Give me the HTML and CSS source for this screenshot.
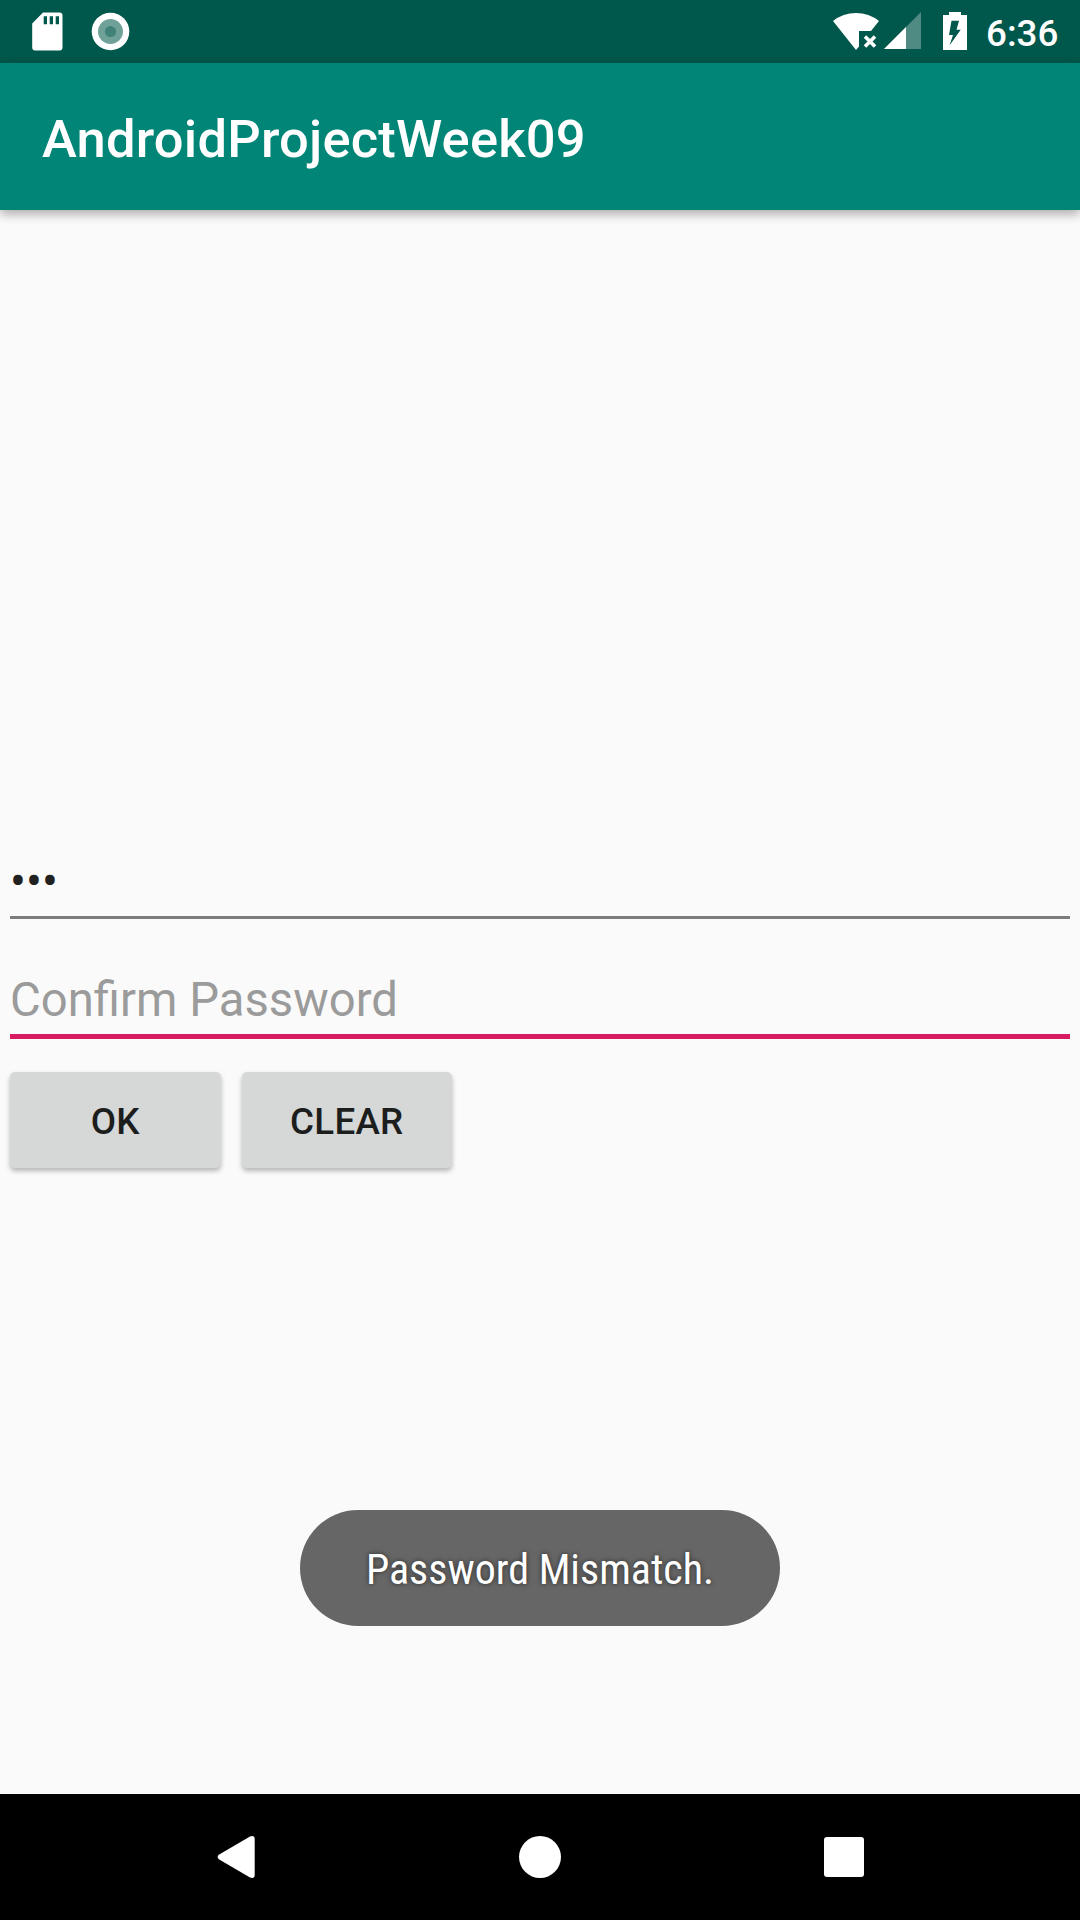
FILE: index.html
```
<!DOCTYPE html>
<html lang="en">
<head>
<meta charset="utf-8">
<title>AndroidProjectWeek09</title>
<link rel="stylesheet" href="styles.css">
</head>
<body>
<div class="screen">
  <header class="status-bar">
    <svg class="status-left" width="140" height="63" viewBox="0 0 140 63">
      <path fill="#fff" fill-rule="evenodd" d="M43 12.5H59.5a3 3 0 0 1 3 3V47.500a3 3 0 0 1-3 3H35.200a3 3 0 0 1-3-3V23.500zM43.700 16.200v8H47v-8zM49.700 16.200v8H53v-8zM55.700 16.200v8H59v-8z"/>
      <circle cx="110.500" cy="31.500" r="18.800" fill="#fff"/>
      <circle cx="110.500" cy="31.500" r="12.500" fill="#6fa199"/>
      <circle cx="110.500" cy="31.500" r="5.600" fill="#418278"/>
    </svg>
    <svg class="status-right" width="160" height="63" viewBox="820 0 160 63">
      <path fill="#fff" d="M833 21Q843 13 856 13T879 21L871 31H859V46.500L856 50z"/>
      <path stroke="#fff" stroke-width="3.600" d="M865 36.500l10 10m0-10l-10 10"/>
      <path fill="#4f8b82" d="M921 12V49H884z"/>
      <path fill="#fff" d="M906 27V49H884z"/>
      <path fill="#fff" d="M949 12h12v3h6v35h-24V15h6z"/>
      <path fill="#00574b" d="M951.500 20.700h7.500l-2.500 9h4.200L949.500 45.500l3.500-10.500h-4z"/>
    </svg>
    <span class="clock">6:36</span>
  </header>
  <div class="app-bar"><h1 class="title">AndroidProjectWeek09</h1></div>
  <main class="content">
    <div class="field field-filled"><span class="dots">•••</span></div>
    <div class="field field-focused"><span class="hint">Confirm Password</span></div>
    <div class="buttons">
      <button class="btn">OK</button>
      <button class="btn">CLEAR</button>
    </div>
    <div class="toast"><span class="toast-text">Password Mismatch.</span></div>
  </main>
  <nav class="nav-bar">
    <svg width="1080" height="126" viewBox="0 1794 1080 126">
      <path fill="#fff" d="M218.800 1854.800L250 1836.400Q254.700 1835 254.700 1839V1875Q254.700 1879 250 1877.600L218.800 1859.200Q216.500 1857 218.800 1854.800z"/>
      <circle cx="540" cy="1857" r="21" fill="#fff"/>
      <rect x="824" y="1837" width="40" height="40" rx="3" fill="#fff"/>
    </svg>
  </nav>
</div>
</body>
</html>
```
FILE: styles.css
```
* { box-sizing: border-box; }
body { margin: 0; font-family: Roboto, "Liberation Sans", sans-serif; }
.screen { width: 1080px; height: 1920px; display: flex; flex-direction: column; background: #fafafa; overflow: hidden; }
.status-bar { height: 63px; background: #00574b; display: flex; align-items: center; }
.status-right { margin-left: auto; }
.clock { width: 100px; padding-left: 6px; padding-top: 3px; font-size: 36.75px; font-weight: 500; line-height: 43px; color: #fff; white-space: nowrap; }
.app-bar { height: 147px; background: #008577; display: flex; align-items: center; padding: 4px 42px 0; box-shadow: 0 4px 10px rgba(0, 0, 0, .32); z-index: 1; }
.title { margin: 0; font-size: 52.5px; font-weight: 500; line-height: 62px; letter-spacing: .2px; color: #fff; }
.content { flex: 1; display: flex; flex-direction: column; padding: 622px 10px 0; }
.field { width: 1060px; display: flex; align-items: flex-end; font-size: 47.25px; line-height: 56px; }
.field-filled { height: 87px; padding-bottom: 6px; border-bottom: 3px solid #7c7c7c; color: #212121; }
.field-focused { height: 120px; padding-bottom: 6px; border-bottom: 5px solid #d81b60; color: #9b9b9b; }
.buttons { display: flex; gap: 21px; margin-top: 33px; }
.btn { width: 210.5px; height: 96px; padding: 2px 0 0; border: 0; border-radius: 5px; background: #d6d8d7; color: #1c1d1d; font-family: inherit; font-size: 36.75px; font-weight: 500; letter-spacing: .25px; box-shadow: 0 3px 5px rgba(0, 0, 0, .28); }
.toast { width: 480px; height: 116px; margin: 342px auto 0; border-radius: 58px; background: #666; display: flex; align-items: center; justify-content: center; padding-top: 3px; }
.toast-text { font-size: 42px; font-family: "Roboto Condensed", Roboto, sans-serif; font-stretch: condensed; line-height: 50px; color: #fff; white-space: nowrap; text-shadow: 0 0 5px rgba(0, 0, 0, .6); }
.nav-bar { height: 126px; background: #000; }
.nav-bar svg { display: block; }
```
